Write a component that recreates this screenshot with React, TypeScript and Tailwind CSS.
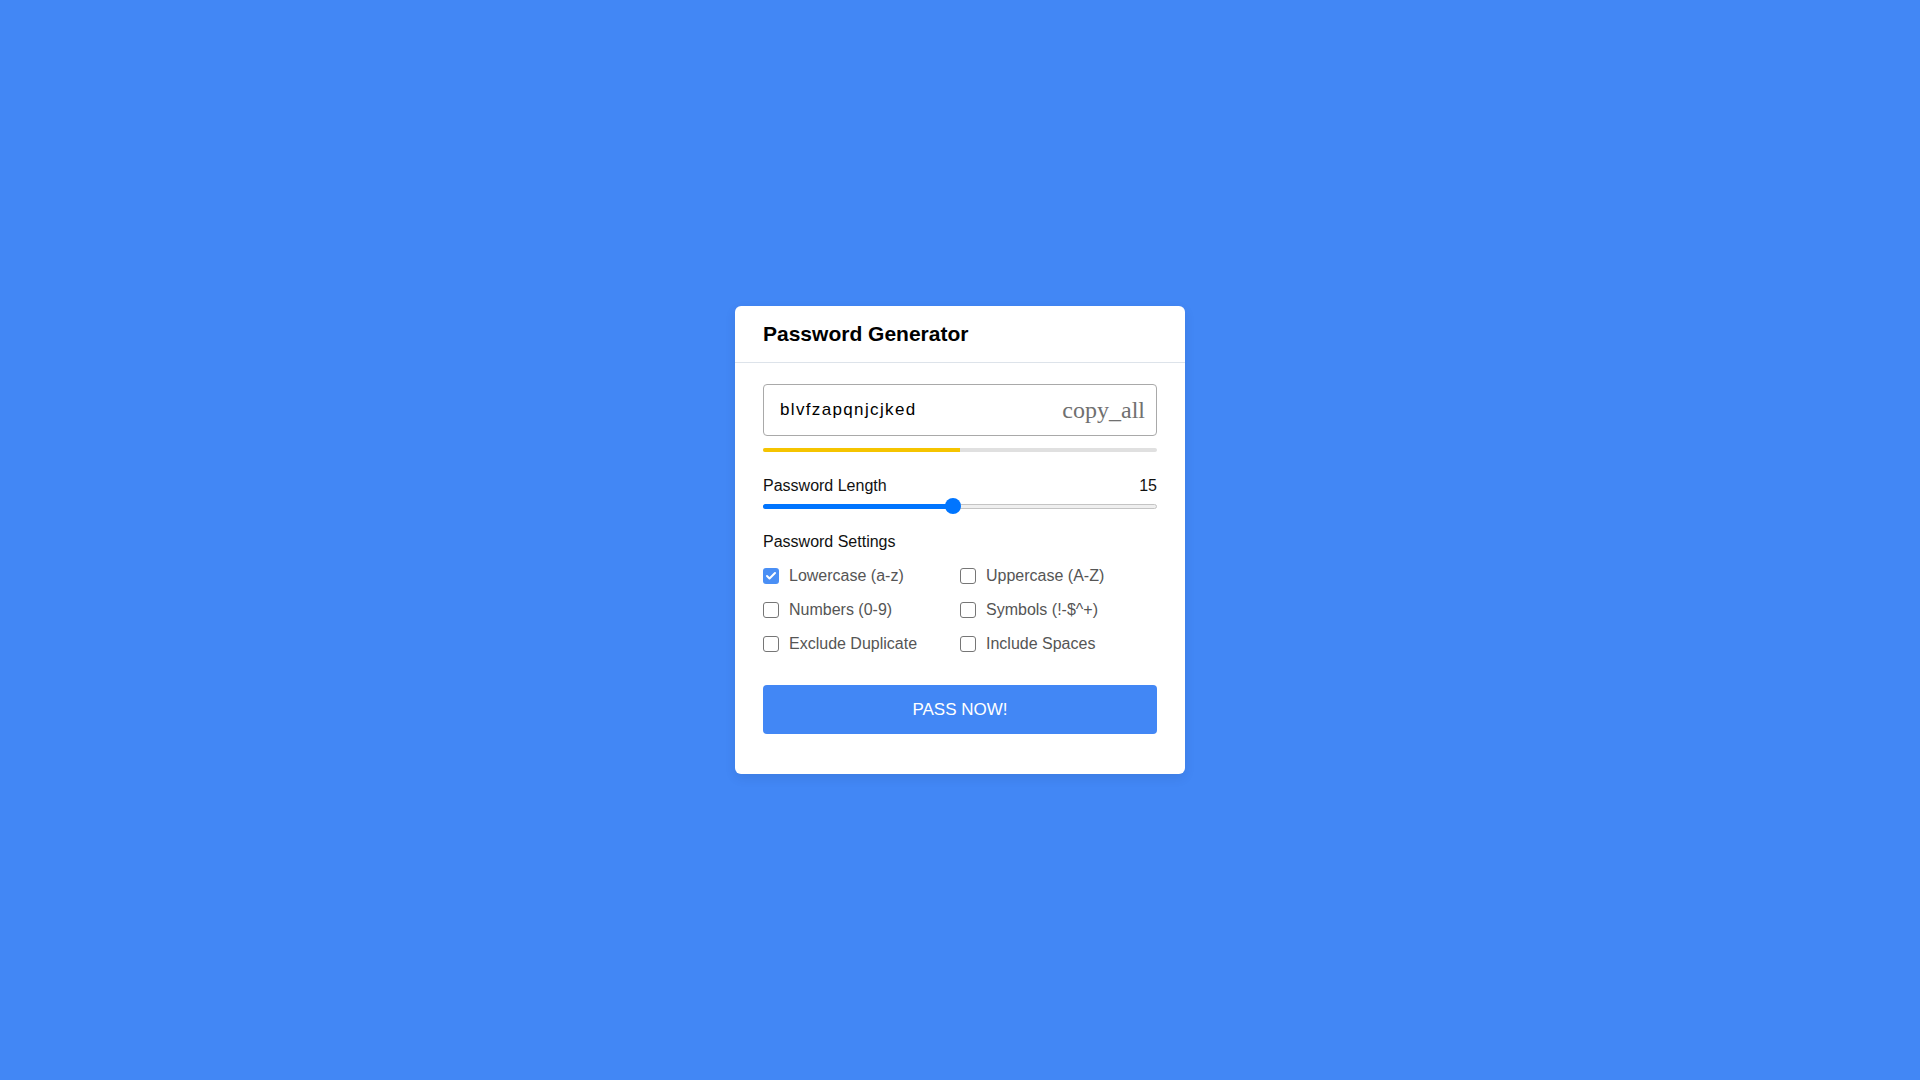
import { Check } from 'lucide-react';

const options = [
  { label: 'Lowercase (a-z)', checked: true },
  { label: 'Uppercase (A-Z)', checked: false },
  { label: 'Numbers (0-9)', checked: false },
  { label: 'Symbols (!-$^+)', checked: false },
  { label: 'Exclude Duplicate', checked: false },
  { label: 'Include Spaces', checked: false },
];

function Checkbox({ checked }: { checked: boolean }) {
  if (checked) {
    return (
      <span className="flex h-[16px] w-[16px] shrink-0 items-center justify-center rounded-[3px] bg-[#4a8ff5]">
        <Check className="h-[12px] w-[12px] text-white" strokeWidth={4} />
      </span>
    );
  }
  return <span className="h-[16px] w-[16px] shrink-0 rounded-[3px] border border-[#767676] bg-white" />;
}

export default function App() {
  const length = 15;
  const pct = ((length - 1) / 29) * 100;

  return (
    <div className="flex min-h-screen w-full items-center justify-center bg-[#4287f5] font-['Liberation_Sans',Arial,sans-serif]">
      <div className="w-[450px] rounded-[6px] bg-white shadow-[0_4px_12px_rgba(0,0,0,0.08)]">
        <header className="flex h-[57px] items-center border-b border-[#dde3ea] px-[28px]">
          <h1 className="text-[21px] font-bold text-black">Password Generator</h1>
        </header>

        <div className="px-[28px] pb-[40px] pt-[21px]">
          <div className="flex h-[52px] items-center justify-between rounded-[4px] border border-[#a9a9a9] pl-[16px] pr-[11px]">
            <span className="text-[17px] tracking-[1.35px] text-black">blvfzapqnjcjked</span>
            <span className="font-['Liberation_Serif',serif] text-[24px] text-[#707070]">copy_all</span>
          </div>

          <div className="mt-[12px] h-[4px] w-full rounded-full bg-[#e0e0e0]">
            <div className="h-full w-1/2 rounded-l-full bg-[#f5c400]" />
          </div>

          <div className="mt-[25px] flex items-center justify-between text-[16px] leading-[18px] text-[#111]">
            <span>Password Length</span>
            <span>{length}</span>
          </div>

          <div className="relative mt-[3px] flex h-[16px] items-center">
            <div className="h-[5px] w-full rounded-full border border-[#c4c4c4] bg-[#efefef]">
              <div className="-mt-px -ml-px h-[5px] rounded-full bg-[#0075ff]" style={{ width: `${pct}%` }} />
            </div>
            <span
              className="absolute top-0 h-[16px] w-[16px] rounded-full bg-[#0075ff]"
              style={{ left: `calc(${pct}% - ${(pct / 100) * 16}px)` }}
            />
          </div>

          <div className="mt-[19px] text-[16px] leading-[18px] text-[#111]">Password Settings</div>

          <div className="mt-[8px] grid grid-cols-2">
            {options.map((o) => (
              <label key={o.label} className="flex h-[34px] items-center gap-[10px] text-[16px] text-[#555]">
                <Checkbox checked={o.checked} />
                <span>{o.label}</span>
              </label>
            ))}
          </div>

          <button className="mt-[24px] flex h-[49px] w-full items-center justify-center rounded-[4px] bg-[#4287f5] text-[17px] text-white">
            PASS NOW!
          </button>
        </div>
      </div>
    </div>
  );
}
